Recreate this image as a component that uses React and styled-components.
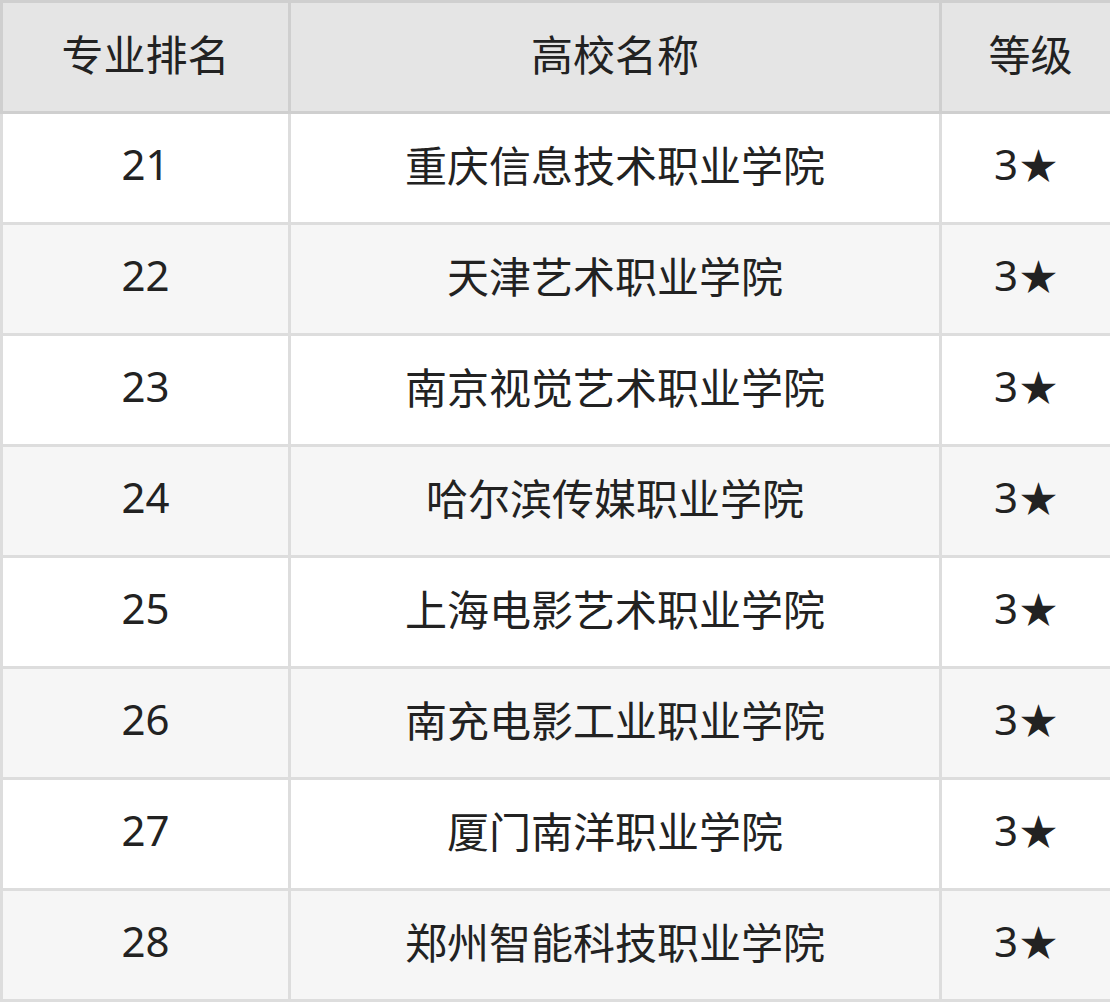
import React from 'react'
import styled, { createGlobalStyle } from 'styled-components'

const GlobalStyle = createGlobalStyle`
  body {
    margin: 0;
    background: #fff;
    font-family: "Noto Sans", "Noto Sans CJK SC", sans-serif;
  }
`;

const Table = styled.table`
  border-collapse: collapse;
  width: 1110px;
  table-layout: fixed;
  color: #222;
  font-size: 42px;
`;

const HeadCell = styled.th`
  height: 98px;
  padding: 0 0 10px;
  font-weight: 400;
  background: #e5e5e5;
  border: 3px solid #cfcfcf;
  text-align: center;
  vertical-align: middle;
  width: ${props => props.width};
`;

const Row = styled.tr`
  background: ${props => (props.alt ? '#f6f6f6' : '#fff')};
`;

const Cell = styled.td`
  height: 98px;
  padding: 0 ${props => (props.shift ? '10px' : '0')} 10px 0;
  border: 3px solid #dddddd;
  text-align: center;
  vertical-align: middle;
`;

const Star = styled.span`
  font-family: "Noto Sans CJK SC", sans-serif;
  font-size: 37px;
  margin-left: 2px;
`;

const rows = [
  ['21', '重庆信息技术职业学院'],
  ['22', '天津艺术职业学院'],
  ['23', '南京视觉艺术职业学院'],
  ['24', '哈尔滨传媒职业学院'],
  ['25', '上海电影艺术职业学院'],
  ['26', '南充电影工业职业学院'],
  ['27', '厦门南洋职业学院'],
  ['28', '郑州智能科技职业学院'],
];

export default function App() {
  return (
    <>
      <GlobalStyle />
      <Table>
        <thead>
          <tr>
            <HeadCell width="285px">专业排名</HeadCell>
            <HeadCell width="648px">高校名称</HeadCell>
            <HeadCell width="177px">等级</HeadCell>
          </tr>
        </thead>
        <tbody>
          {rows.map(([rank, name], i) => (
            <Row key={rank} alt={i % 2 === 1}>
              <Cell>{rank}</Cell>
              <Cell>{name}</Cell>
              <Cell shift>3<Star>★</Star></Cell>
            </Row>
          ))}
        </tbody>
      </Table>
    </>
  );
}
